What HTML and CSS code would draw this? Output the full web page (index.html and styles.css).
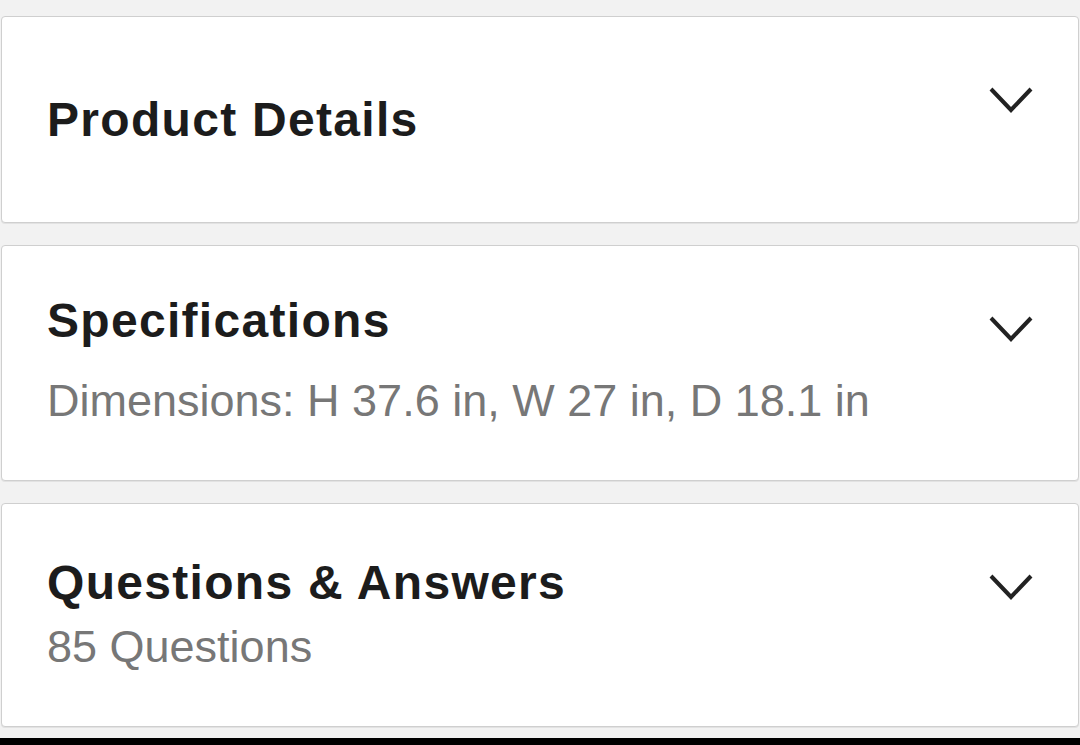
FILE: index.html
```html
<!DOCTYPE html>
<html lang="en">
<head>
<meta charset="utf-8">
<title>Product sections</title>
<link rel="stylesheet" href="styles.css">
</head>
<body>
<main class="page">
  <section class="card card--single">
    <div class="card__text">
      <h2 class="card__title">Product Details</h2>
    </div>
    <svg class="chevron" viewBox="0 0 48 30" width="48" height="30" aria-hidden="true"><polyline points="4,4 24,25 44,4"/></svg>
  </section>
  <section class="card card--spec">
    <div class="card__text">
      <h2 class="card__title">Specifications</h2>
      <p class="card__sub">Dimensions: H 37.6 in, W 27 in, D 18.1 in</p>
    </div>
    <svg class="chevron" viewBox="0 0 48 30" width="48" height="30" aria-hidden="true"><polyline points="4,4 24,25 44,4"/></svg>
  </section>
  <section class="card card--qa">
    <div class="card__text">
      <h2 class="card__title">Questions &amp; Answers</h2>
      <p class="card__sub">85 Questions</p>
    </div>
    <svg class="chevron" viewBox="0 0 48 30" width="48" height="30" aria-hidden="true"><polyline points="4,4 24,25 44,4"/></svg>
  </section>
</main>
<div class="bottom-bar"></div>
</body>
</html>
```
FILE: styles.css
```css
html, body {
  margin: 0;
  padding: 0;
}
body {
  background: #f2f2f2;
  font-family: "Liberation Sans", Arial, Helvetica, sans-serif;
  width: 1080px;
  height: 745px;
  overflow: hidden;
}
.page {
  display: flex;
  flex-direction: column;
  gap: 22px;
  padding: 16px 1px 0 1px;
}
.card {
  display: flex;
  justify-content: space-between;
  align-items: flex-start;
  background: #fff;
  border: 1px solid #cfcfcf;
  border-radius: 4px;
  box-shadow: 0 1px 0 #e2e2e2;
  padding: 0 43px 0 45px;
}
.card__text {
  padding: 49px 0 53px 0;
}
.card--single .card__text {
  padding: 75px 0 74px 0;
}
.card--qa .card__text {
  padding-top: 51px;
}
.card--spec .card__text {
  padding-top: 47px;
}
.card__title {
  margin: 0;
  font-size: 48px;
  line-height: 56px;
  font-weight: 700;
  letter-spacing: 1.3px;
  color: #1c1c1c;
}
.card__sub {
  margin: 10px 0 0 0;
  font-size: 45px;
  line-height: 52px;
  font-weight: 400;
  color: #777;
}
.card--spec .card__sub {
  margin-top: 26px;
}
.chevron {
  flex: none;
  margin-top: 68px;
  fill: none;
  stroke: #222;
  stroke-width: 4;
  stroke-linejoin: miter;
}
.bottom-bar {
  margin-top: 11px;
  height: 7px;
  background: #000;
}
```
